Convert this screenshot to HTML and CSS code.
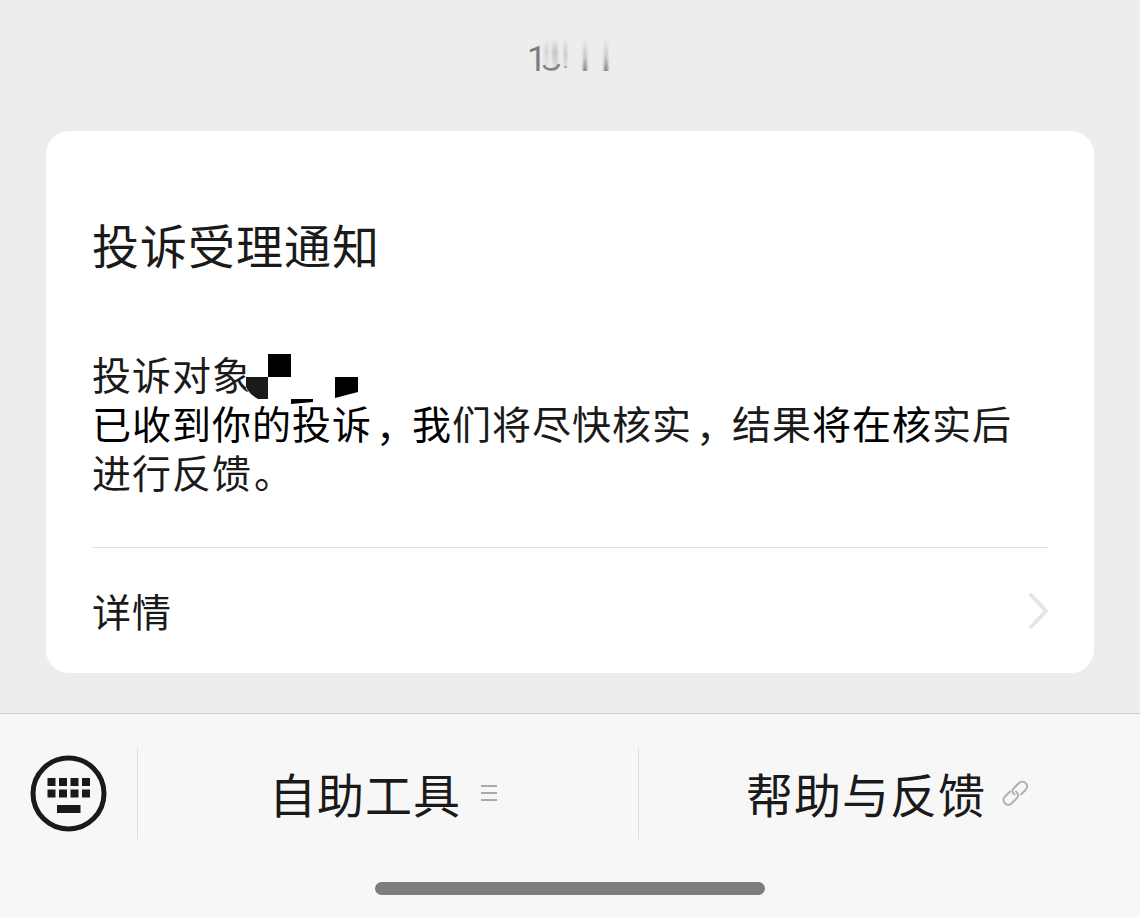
FILE: index.html
```html
<!DOCTYPE html>
<html lang="zh-CN">
<head>
<meta charset="UTF-8" />
<meta name="viewport" content="width=device-width, initial-scale=1" />
<title>投诉受理通知</title>
<link rel="stylesheet" href="styles.css">
</head>
<body>
<main class="chat">
  <div class="time">
    <span>1</span>
    <svg width="72" height="40" viewBox="0 0 72 40" aria-hidden="true">
      <defs>
        <linearGradient id="fade" x1="0" y1="0" x2="0" y2="1">
          <stop offset="0" stop-color="#888" stop-opacity="0" />
          <stop offset=".6" stop-color="#888" stop-opacity=".4" />
          <stop offset="1" stop-color="#777" stop-opacity=".95" />
        </linearGradient>
        <linearGradient id="haze" x1="0" y1="0" x2="0" y2="1">
          <stop offset="0" stop-color="#888" stop-opacity="0" />
          <stop offset=".5" stop-color="#888" stop-opacity=".4" />
          <stop offset="1" stop-color="#888" stop-opacity=".15" />
        </linearGradient>
        <filter id="soft" x="-50%" width="200%"><feGaussianBlur stdDeviation=".8 .3" /></filter>
      </defs>
      <g filter="url(#soft)">
        <path d="M3 2h5v28h-5z" fill="url(#haze)" opacity=".6" />
        <path d="M11 2h6v28h-6z" fill="url(#haze)" />
        <path d="M23 2h3v30h-3z" fill="url(#haze)" />
        <path d="M42 2h4v33h-4zM63 2h4v33h-4z" fill="url(#fade)" />
      </g>
      <path d="M3 29c1 6 13 6 15-1" fill="none" stroke="#858585" stroke-width="2.8" />
      <path d="M23 30h3v2h-3z" fill="#aaa" />
    </svg>
  </div>
  <section class="card">
    <h1>投诉受理通知</h1>
    <div class="message">
      <div class="target">投诉对象
        <svg class="mosaic" width="114" height="52" viewBox="0 0 114 52" aria-hidden="true">
          <path d="M1 0h113v50H15L1 36z" fill="#fff" />
          <path d="M23 1h23v23H23zM90 24h23v15l-23 6zM46 46h22v3l-22 2z" fill="#000" />
          <path d="M1 24h22v22H13Q4 41 1 34z" fill="#1a1a1a" />
        </svg>
      </div>
      <div><span class="dark">已收到你的投诉<span class="comma">，</span>我</span>们将尽快核实<span class="comma">，</span>结果<span class="dark">将在核</span>实后</div>
      <div>进行反馈<span class="stop">。</span></div>
    </div>
    <a class="detail">
      <span>详情</span>
      <svg width="20" height="36" viewBox="0 0 20 36" aria-hidden="true"><path d="M3 2l15 16L3 34" fill="none" stroke="#e5e5e5" stroke-width="4" stroke-linejoin="round" stroke-linecap="round" /></svg>
    </a>
  </section>
</main>
<footer class="toolbar">
  <nav class="menu">
    <button class="keyboard" aria-label="键盘">
      <svg width="78" height="78" viewBox="-1 -1 78 78">
        <circle cx="37.5" cy="37.5" r="35.5" fill="none" stroke="#1a1a1a" stroke-width="5" />
        <path d="M16.5 22h8v8h-8zM28 22h8v8h-8zM39.5 22h8v8h-8zM51 22h8v8h-8zM16.5 33.5h8v8h-8zM28 33.5h8v8h-8zM39.5 33.5h8v8h-8zM51 33.5h8v8h-8zM26 49h23.5v8H26z" fill="#1a1a1a" />
      </svg>
    </button>
    <button class="item tools"><span>自助工具</span>
      <svg width="18" height="20" viewBox="0 0 18 20" aria-hidden="true"><path d="M1 2h16M1 9h16M1 16h16" stroke="#aaa" stroke-width="2" /></svg>
    </button>
    <button class="item help"><span>帮助与反馈</span>
      <svg width="28" height="28" viewBox="0 0 28 28" fill="none" stroke="#b0b0b0" stroke-width="2" stroke-linecap="round" aria-hidden="true">
        <path d="M19 14.5L23.5 10C28 5 21.5 -1 17 3L12 8C9.5 10.5 10 12.5 12.5 14.5" />
        <path d="M8 11.5L3 16.5C-1.5 21 5 27.5 9.5 23.5L14.5 18.5C17 16 16.5 13.5 14 11.5" />
      </svg>
    </button>
  </nav>
  <div class="home-bar"></div>
</footer>
</body>
</html>
```
FILE: styles.css
```css
:root{--bg:#ededed;--bar:#f7f7f7;--txt:#1a1a1a;--line:#e2e2e2;}
*,*:before,*:after{box-sizing:border-box;}
body{margin:0;height:917px;background:var(--bg);color:var(--txt);font-family:"Noto Sans CJK SC",sans-serif;font-weight:400;display:flex;flex-direction:column;overflow:hidden;}
svg{display:block;flex-shrink:0;}
.chat{height:713px;padding:0 46px;}
.time{height:131px;padding:36px 0 0 481px;display:flex;color:#7d7d7d;font-family:Roboto,"Noto Sans CJK SC",sans-serif;font-size:35px;line-height:47px;}
.time span{width:14px;flex-shrink:0;}
.card{height:542px;padding:78px 46px 0;background:#fff;border-radius:23px;display:flex;flex-direction:column;}
h1{margin:0;font-size:47px;letter-spacing:1px;line-height:70px;font-weight:400;}
.message{height:198px;margin-top:70px;font-size:39px;letter-spacing:1px;line-height:49px;white-space:nowrap;}
.target{display:flex;height:49px;}
.mosaic{margin:4px 0 0 -7px;}
.dark{color:#000;}
.comma{display:inline-block;width:40px;height:49px;text-indent:4px;vertical-align:top;padding-top:2px;}
.stop{padding-left:2px;}
.detail{height:126px;border-top:1px solid var(--line);display:flex;align-items:center;justify-content:space-between;font-size:39px;letter-spacing:1px;}
.detail span{padding-bottom:2px;}
.toolbar{height:204px;background:var(--bar);border-top:1px solid #cfcfcf;}
.menu{display:flex;height:125px;padding-top:34px;}
button{border:0;background:none;color:inherit;font:inherit;padding:0;}
.keyboard{width:137px;padding-left:30px;}
.item{width:501px;height:91px;border-left:1px solid #dedede;display:flex;align-items:center;font-size:47px;letter-spacing:1px;white-space:nowrap;}
.item span{padding-bottom:3px;}
.tools{padding-left:131px;gap:19px;}
.help{padding-left:107px;gap:16px;}
.home-bar{width:390px;height:13px;margin:43px auto 0;border-radius:7px;background:#7d7d7d;}
```
